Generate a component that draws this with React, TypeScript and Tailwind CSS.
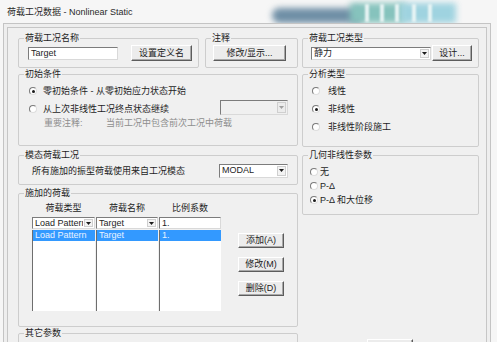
import React from 'react';

const Arrow = ({ disabled }: { disabled?: boolean }) => (
  <span className={`m-[1px] flex w-[9px] shrink-0 items-center justify-center border border-[#cfcfcf] ${disabled ? 'bg-[#ececec]' : 'bg-[#f3f3f3]'}`}>
    <svg width="5" height="3" viewBox="0 0 5 3">
      <path d="M0 0h5L2.5 3z" fill={disabled ? '#a0a0a0' : '#1a1a1a'} />
    </svg>
  </span>
);

const Select = ({ value, className = '', disabled }: { value?: string; className?: string; disabled?: boolean }) => (
  <div className={`flex items-stretch overflow-hidden border border-t-[#7c7c7c] border-l-[#7c7c7c] border-r-[#d9d9d9] border-b-[#d9d9d9] ${disabled ? 'bg-[#f0f0f0]' : 'bg-white'} ${className}`}>
    <span className="flex-1 overflow-hidden whitespace-nowrap pl-[2px] leading-[11px]">{value}</span>
    <Arrow disabled={disabled} />
  </div>
);

const Btn = ({ children, className = '' }: { children?: React.ReactNode; className?: string }) => (
  <button className={`flex items-center justify-center border border-t-white border-l-white border-r-[#5c5c5c] border-b-[#5c5c5c] bg-[#ececec] text-[9px] leading-none text-[#222] shadow-[inset_-1px_-1px_0_#a8a8a8] ${className}`}>
    {children}
  </button>
);

const Radio = ({ checked }: { checked?: boolean }) => (
  <span className="flex h-[8px] w-[8px] shrink-0 items-center justify-center rounded-full border border-t-[#7a7a7a] border-l-[#7a7a7a] border-r-[#dddddd] border-b-[#dddddd] bg-white">
    {checked && <span className="h-[3px] w-[3px] rounded-full bg-[#1a1a1a]" />}
  </span>
);

const Group = ({ title, className = '', children }: { title: string; className?: string; children?: React.ReactNode }) => (
  <fieldset className={`min-w-0 shrink-0 rounded-[2px] border border-[#cdcdcd] ${className}`}>
    <legend className="ml-[5px] px-[1px] text-[9px] leading-[12px] text-[#1e1e1e]">{title}</legend>
    {children}
  </fieldset>
);

const LoadColumn = ({ title, value, combo, width }: { title: string; value: string; combo: boolean; width: string }) => (
  <div className={`flex flex-col ${width}`}>
    <div className="h-[12px] text-center leading-[12px]">{title}</div>
    {combo ? (
      <Select value={value} className="mt-[3px] h-[12px]" />
    ) : (
      <div className="mt-[3px] h-[12px] border border-t-[#7c7c7c] border-l-[#7c7c7c] border-r-[#d9d9d9] border-b-[#d9d9d9] bg-white pl-[2px] leading-[10px]">{value}</div>
    )}
    <div className="mt-[1px] h-[81px] border-l border-[#6e6e6e] bg-white">
      <div className="h-[11px] overflow-hidden whitespace-nowrap bg-[#3399ff] pl-[2px] leading-[11px] text-[#e8f2ff]">{value}</div>
    </div>
  </div>
);

export default function App() {
  return (
    <div className="relative h-[342px] w-[497px] overflow-hidden bg-[#f6f6f6] font-['Liberation_Sans','Noto_Sans_CJK_SC',sans-serif] text-[9px] leading-[12px] text-[#1e1e1e]">
      <div className="relative flex h-[23px] items-center pl-[7px]">
        {/* blurred glass title bar */}
        <div className="absolute left-[272px] top-[8px] h-[15px] w-[90px] rounded-l-full bg-[#6f8fa6] blur-[3px]" />
        <div className="absolute left-[350px] top-[3px] h-[20px] w-[55px] bg-[#86c3bd] blur-[3px]" />
        <div className="absolute left-[400px] top-[3px] h-[20px] w-[56px] bg-[#9fd3e0] blur-[3px]" />
        <div className="absolute left-[365px] top-[4px] h-[18px] w-[4px] bg-[#e8f4f4] blur-[1px]" />
        <div className="absolute left-[380px] top-[4px] h-[18px] w-[4px] bg-[#e8f4f4] blur-[1px]" />
        <div className="absolute left-[395px] top-[4px] h-[18px] w-[4px] bg-[#e8f4f4] blur-[1px]" />
        <div className="absolute left-[412px] top-[4px] h-[18px] w-[4px] bg-[#e8f4f4] blur-[1px]" />
        <div className="absolute left-[428px] top-[4px] h-[18px] w-[4px] bg-[#e8f4f4] blur-[1px]" />
        <span className="relative text-[#2a2a2a]">荷载工况数据 - Nonlinear Static</span>
      </div>

      <div className="relative ml-[3px] mr-[6px] h-[319px] border border-b-0 border-[#c4c4c4] bg-[#eeeeee] px-[3px] pt-[3px]">
        <div className="flex h-full gap-[4px] border border-b-0 border-[#c6c6c6] bg-[#f0f0f0] pl-[10px] pr-[7px] pt-[4px]">
          {/* left column */}
          <div className="flex w-[280px] shrink-0 flex-col">
            <div className="flex h-[36px] gap-[6px]">
              <Group title="荷载工况名称" className="h-[36px] w-[181px]">
                <div className="mt-[1px] flex h-[16px] items-center pl-[9px]">
                  <div className="h-[13px] w-[90px] border border-t-[#7c7c7c] border-l-[#7c7c7c] border-r-[#d9d9d9] border-b-[#d9d9d9] bg-white pl-[2px] leading-[11px]">Target</div>
                  <Btn className="ml-[13px] h-[16px] w-[61px]">设置定义名</Btn>
                </div>
              </Group>
              <Group title="注释" className="h-[36px] w-[93px]">
                <div className="mt-[1px] flex h-[16px] items-center pl-[7px]">
                  <Btn className="h-[16px] w-[73px]">修改/显示...</Btn>
                </div>
              </Group>
            </div>

            <Group title="初始条件" className="h-[78px]">
              <div className="flex flex-col pt-[2px]">
                <div className="flex h-[18px] items-center gap-[6px] pl-[10px]">
                  <Radio checked />
                  <span>零初始条件 - 从零初始应力状态开始</span>
                </div>
                <div className="flex h-[17px] items-center pl-[10px] pr-[9px]">
                  <Radio />
                  <span className="ml-[6px]">从上次非线性工况终点状态继续</span>
                  <Select disabled className="ml-auto h-[15px] w-[68px] self-start" />
                </div>
                <div className="flex h-[12px] items-center pl-[25px] text-[#8e8e8e]">
                  <span className="w-[62px]">重要注释:</span>
                  <span>当前工况中包含前次工况中荷载</span>
                </div>
              </div>
            </Group>

            <Group title="模态荷载工况" className="mt-[3px] h-[36px]">
              <div className="mt-[2px] flex h-[15px] items-center justify-between pl-[13px] pr-[9px]">
                <span>所有施加的振型荷载使用来自工况模态</span>
                <Select value="MODAL" className="h-[14px] w-[69px]" />
              </div>
            </Group>

            <Group title="施加的荷载" className="mt-[2px] h-[140px]">
              <div className="flex pl-[13px] pt-[3px]">
                <div className="flex gap-[1px]">
                  <LoadColumn title="荷载类型" value="Load Pattern" combo width="w-[63px]" />
                  <LoadColumn title="荷载名称" value="Target" combo width="w-[62px]" />
                  <LoadColumn title="比例系数" value="1." combo={false} width="w-[62px]" />
                </div>
                <div className="ml-[17px] flex flex-col gap-[9px] pt-[31px]">
                  <Btn className="h-[15px] w-[46px]">添加(A)</Btn>
                  <Btn className="h-[15px] w-[46px]">修改(M)</Btn>
                  <Btn className="h-[15px] w-[46px]">删除(D)</Btn>
                </div>
              </div>
            </Group>

            <Group title="其它参数" className="h-[30px]" />
          </div>

          {/* right column */}
          <div className="flex w-[177px] shrink-0 flex-col">
            <Group title="荷载工况类型" className="h-[36px]">
              <div className="mt-[1px] flex h-[16px] items-center gap-[1px] pl-[8px]">
                <Select value="静力" className="h-[13px] w-[120px]" />
                <Btn className="h-[16px] w-[40px]">设计...</Btn>
              </div>
            </Group>

            <Group title="分析类型" className="h-[79px]">
              <div className="flex flex-col pt-[2px]">
                {[
                  ['线性', false],
                  ['非线性', true],
                  ['非线性阶段施工', false],
                ].map(([label, on]) => (
                  <div key={label as string} className="flex h-[18px] items-center gap-[8px] pl-[9px]">
                    <Radio checked={on as boolean} />
                    <span>{label as string}</span>
                  </div>
                ))}
              </div>
            </Group>

            <Group title="几何非线性参数" className="mt-[2px] h-[66px]">
              <div className="flex flex-col pt-[4px]">
                {[
                  ['无', false],
                  ['P-Δ', false],
                  ['P-Δ 和大位移', true],
                ].map(([label, on]) => (
                  <div key={label as string} className="flex h-[14px] items-center gap-[2px] pl-[7px]">
                    <Radio checked={on as boolean} />
                    <span>{label as string}</span>
                  </div>
                ))}
              </div>
            </Group>

            <Btn className="ml-[65px] mt-[124px] h-[15px] w-[46px] shrink-0" />
          </div>
        </div>
      </div>
    </div>
  );
}
